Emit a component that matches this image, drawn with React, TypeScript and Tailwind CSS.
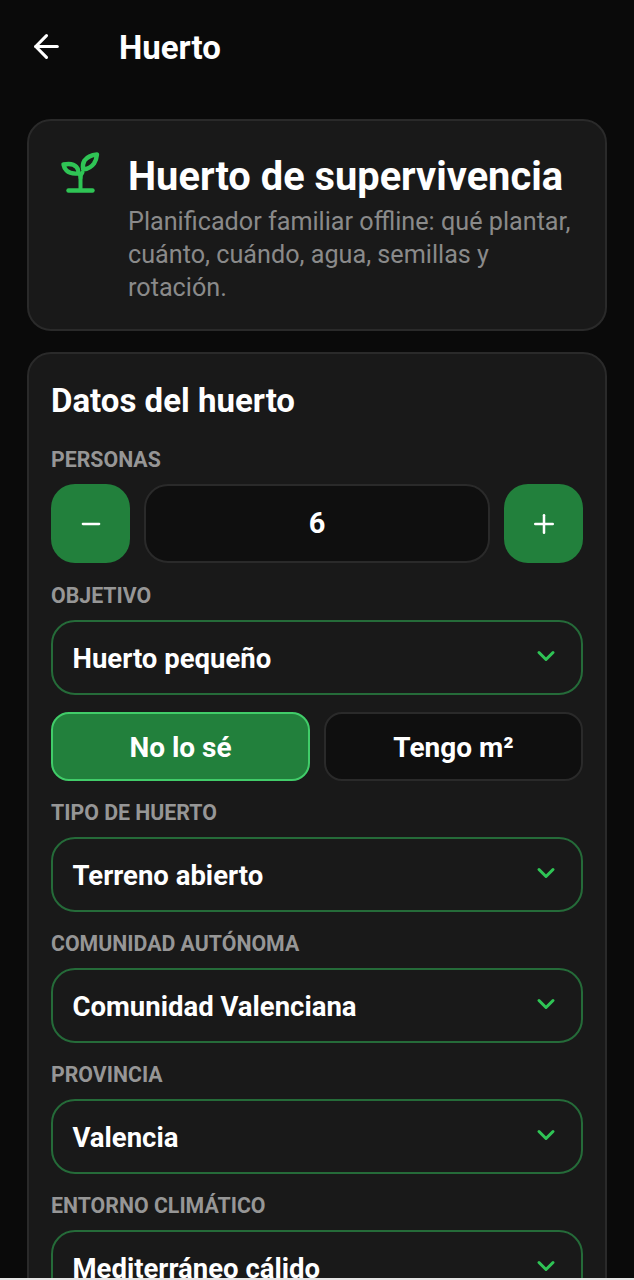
import React from 'react';
import { ArrowLeft, ChevronDown, Minus, Plus } from 'lucide-react';

const Sprout = () => (
  <svg viewBox="0 0 40 44" className="w-[40px] h-[44px] shrink-0 text-[#2fc455]" fill="none" stroke="currentColor" strokeLinecap="round" strokeLinejoin="round">
    <path strokeWidth="4" d="M20.500 38V27c0-2.500-.5-4-2-5.500" />
    <path strokeWidth="4" d="M20.500 27c0-2.500.5-4 2-5.500" />
    <path strokeWidth="4.400" d="M3.500 13.500c5-1 10.500-.5 13 2.500 1.800 2 2 4.500 1.500 6.500-5 .5-9-.5-11.500-3-1.500-1.500-2.500-3.500-3-6z" />
    <path strokeWidth="4.400" d="M37 3.500c-5.500.5-10 2.500-12.500 6-1.800 3-2 6-1.300 9 4.500-.5 8.300-2.500 10.800-6 1.800-2.800 2.700-5.800 3-9z" />
    <path strokeWidth="4.400" d="M8.500 39.500h24" />
  </svg>
);

const Label = ({ children }: { children: React.ReactNode }) => (
  <p className="text-[21.300px] leading-[24px] font-bold text-[#969696]">{children}</p>
);

const SelectBox = ({ value }: { value: string }) => (
  <div className="h-[75px] shrink-0 flex items-center justify-between rounded-[24px] border-2 border-[#256b39] pl-[19.500px] pr-[21px]">
    <span className="text-[27.500px] font-bold text-white leading-none translate-y-[1px]">{value}</span>
    <ChevronDown size={28} strokeWidth={2.6} className="text-[#2fc455] -translate-y-[2px]" />
  </div>
);

const Select = ({ label, value }: { label: string; value: string }) => (
  <div className="flex flex-col gap-[12px]">
    <Label>{label}</Label>
    <SelectBox value={value} />
  </div>
);

const StepBtn = ({ children }: { children: React.ReactNode }) => (
  <div className="w-[79px] h-[79px] shrink-0 rounded-[24px] bg-[#22803c] flex items-center justify-center text-white">
    {children}
  </div>
);

export default function App() {
  return (
    <div className="h-[1280px] overflow-hidden flex flex-col bg-[#0a0a0a] font-['Roboto',sans-serif]">
      <div className="flex-1 overflow-hidden">
        <header className="h-[94px] flex items-center pl-[28px]">
          <ArrowLeft size={37} strokeWidth={2} className="text-white -translate-y-[1px]" />
          <h1 className="ml-[54px] text-[33px] font-bold text-white leading-none">Huerto</h1>
        </header>

        <div className="px-[27px] pt-[25px] flex flex-col gap-[21px]">
          <section className="h-[212px] rounded-[24px] border-2 border-[#2a2a2a] bg-[#191919] pt-[30px] pl-[31px] flex gap-[28px]">
            <Sprout />
            <div className="w-[445px]">
              <h2 className="text-[39.800px] font-bold text-white leading-[52px] whitespace-nowrap">Huerto de supervivencia</h2>
              <p className="mt-[2px] text-[25.200px] leading-[33px] text-[#8a8a8a]">
                Planificador familiar offline: qué plantar, cuánto, cuándo, agua, semillas y rotación.
              </p>
            </div>
          </section>

          <section className="rounded-[24px] border-2 border-[#2a2a2a] bg-[#191919] px-[22px] pt-[27px] pb-[24px] flex flex-col">
            <h2 className="text-[33px] font-bold text-white leading-[40px]">Datos del huerto</h2>
            <div className="mt-[27px] flex flex-col gap-[12px]">
              <Label>PERSONAS</Label>
              <div className="flex gap-[14px]">
                <StepBtn><Minus size={28} strokeWidth={2} /></StepBtn>
                <div className="flex-1 rounded-[24px] border-2 border-[#2a2a2a] bg-[#0f0f0f] flex items-center justify-center text-[29px] font-bold text-white">6</div>
                <StepBtn><Plus size={30} strokeWidth={2} /></StepBtn>
              </div>
            </div>
            <div className="mt-[21px]">
              <Select label="OBJETIVO" value="Huerto pequeño" />
            </div>
            <div className="mt-[17px] grid grid-cols-2 gap-[14px]">
              <div className="h-[69px] pt-[2px] rounded-[18px] border-2 border-[#41cc69] bg-[#22803c] flex items-center justify-center text-[28px] font-bold text-white">No lo sé</div>
              <div className="h-[69px] pt-[2px] rounded-[18px] border-2 border-[#2a2a2a] bg-[#0f0f0f] flex items-center justify-center text-[28px] font-bold text-white">Tengo m²</div>
            </div>
            <div className="mt-[20px] flex flex-col gap-[20px]">
              <Select label="TIPO DE HUERTO" value="Terreno abierto" />
              <Select label="COMUNIDAD AUTÓNOMA" value="Comunidad Valenciana" />
              <Select label="PROVINCIA" value="Valencia" />
              <Select label="ENTORNO CLIMÁTICO" value="Mediterráneo cálido" />
            </div>
          </section>
        </div>
      </div>
      <div className="h-[2px] shrink-0 bg-[#e6e6e6]" />
    </div>
  );
}
